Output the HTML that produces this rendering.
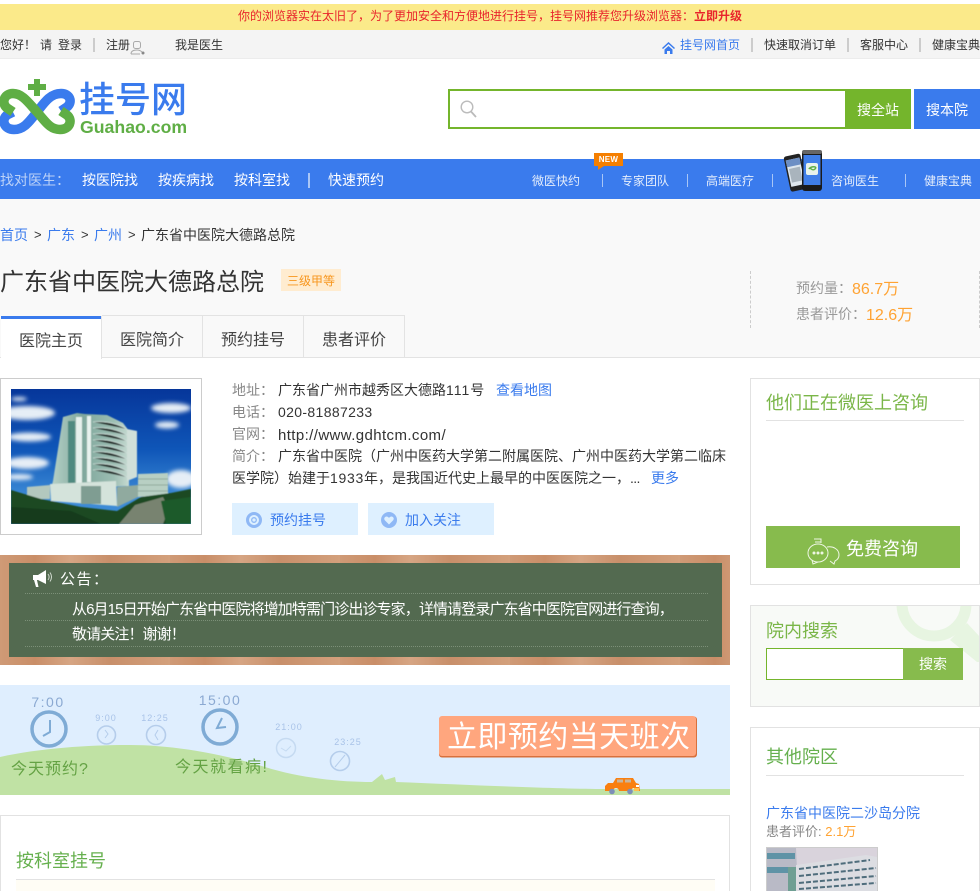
<!DOCTYPE html>
<html lang="zh-CN">
<head>
<meta charset="utf-8">
<title>广东省中医院大德路总院</title>
<style>
html,body{margin:0;padding:0;background:#fff;width:980px;height:891px;overflow:hidden;}
#p{position:relative;width:980px;height:891px;overflow:hidden;font-family:"Liberation Sans","Noto Sans CJK SC",sans-serif;font-size:12px;color:#333;}
.a{position:absolute;}
.t{position:absolute;white-space:nowrap;line-height:20px;height:20px;}
.b{color:#3a7bed;}
.s{position:absolute;width:2px;background:#ccc;}
.n{color:#fff;font-size:14px;}
.m{color:#e4edfc;font-size:12px;}
.ns{position:absolute;width:1px;height:13px;top:174px;background:#a9c6f6;}
.tab{position:absolute;top:315px;height:41px;background:#f9f9f9;border:1px solid #e3e3e3;border-left:0;border-bottom:0;width:100px;}
.l{color:#888;font-size:14px;}
.v{color:#333;font-size:14px;}
.dot{position:absolute;left:25px;width:683px;border-top:1px dotted #7c9078;height:0;}
.box{position:absolute;border:1px solid #e2e2e2;box-sizing:border-box;}
.gt{font-size:18px;color:#7ab648;}
</style>
</head>
<body>
<div id="p">
<!-- top notice -->
<div class="a" style="left:0;top:4px;width:980px;height:26px;background:#fbea8a;"></div>
<div class="t" style="left:238px;top:6px;color:#e8242c;">你的浏览器实在太旧了，为了更加安全和方便地进行挂号，挂号网推荐您升级浏览器：<b>立即升级</b></div>

<!-- top bar -->
<div class="a" style="left:0;top:30px;width:980px;height:28px;background:#f4f4f4;border-bottom:1px solid #ececec;"></div>
<div class="t" style="left:0;top:35px;">您好！</div>
<div class="t" style="left:40px;top:35px;">请</div>
<div class="t" style="left:58px;top:35px;">登录</div>
<div class="s" style="left:93px;top:38px;height:14px;"></div>
<div class="t" style="left:106px;top:35px;">注册</div>
<svg class="a" style="left:130px;top:40px;" width="15" height="16" viewBox="0 0 15 16" fill="none" stroke="#aaa" stroke-width="1"><rect x="3.500" y="1.500" width="7" height="7" rx="2"/><path d="M1 14c0-3 3-4 6-4s4 1 5 2M1 14h9"/><circle cx="13" cy="13" r="1.500" fill="#888" stroke="none"/></svg>
<div class="t" style="left:175px;top:35px;">我是医生</div>

<svg class="a" style="left:662px;top:42px;" width="13" height="12" viewBox="0 0 13 12"><path d="M6.500 0L13 6l-1 1-5.500-5L1 7 0 6zM2.500 7.500L6.500 4l4 3.500V12H8V9H5v3H2.500z" fill="#3a7bed"/></svg>
<div class="t b" style="left:680px;top:35px;">挂号网首页</div>
<div class="s" style="left:751px;top:38px;height:14px;"></div>
<div class="t" style="left:764px;top:35px;">快速取消订单</div>
<div class="s" style="left:847px;top:38px;height:14px;"></div>
<div class="t" style="left:860px;top:35px;">客服中心</div>
<div class="s" style="left:919px;top:38px;height:14px;"></div>
<div class="t" style="left:932px;top:35px;">健康宝典</div>

<!-- logo -->
<svg class="a" style="left:0;top:76px;" width="78" height="62" viewBox="0 0 78 62" fill="none" stroke-width="9.500">
<path d="M61 35L67 31C73 26 70 17.500 61 17.500C50 17.500 44 27 37 36C29 46 24 53.500 14 53.500C4 53.500 1 44 7 39L13 36" stroke="#3a7bed"/>
<path d="M13 36L7 32C1 27 4 17.500 13 17.500C22 17.500 28 26 37 36C46 46 50 53.500 60 53.500C70 53.500 73 44 67 39L61 35" stroke="#5fae45"/>
<path d="M28 11h18M37 3v17" stroke="#5fae45" stroke-width="6"/>
</svg>
<div class="t" style="left:79px;top:81px;height:38px;line-height:38px;font-size:36px;font-weight:500;color:#3a7bed;">挂号网</div>
<div class="t" style="left:80px;top:117px;font-size:17.700px;font-weight:bold;color:#5fae45;">Guahao.com</div>

<!-- search -->
<div class="a" style="left:448px;top:89px;width:397px;height:36px;border:2px solid #74b52c;border-right:0;background:#fff;"></div>
<svg class="a" style="left:460px;top:100px;" width="17" height="18" viewBox="0 0 17 18" fill="none" stroke="#bbb"><circle cx="7" cy="7" r="5.800" stroke-width="1.400"/><path d="M11 11.500l5 5.500" stroke-width="1.800"/></svg>
<div class="a" style="left:845px;top:89px;width:66px;height:40px;background:#74b52c;"></div>
<div class="t" style="left:857px;top:100px;color:#fff;font-size:14px;">搜全站</div>
<div class="a" style="left:914px;top:89px;width:66px;height:40px;background:#3a7bed;"></div>
<div class="t" style="left:926px;top:100px;color:#fff;font-size:14px;">搜本院</div>

<!-- nav -->
<div class="a" style="left:0;top:159px;width:980px;height:40px;background:#3a7bed;"></div>
<div class="t n" style="left:0;top:170px;color:#bcd2f8;">找对医生：</div>
<div class="t n" style="left:82px;top:170px;">按医院找</div>
<div class="t n" style="left:158px;top:170px;">按疾病找</div>
<div class="t n" style="left:234px;top:170px;">按科室找</div>
<div class="a" style="left:308px;top:173px;width:2px;height:15px;background:#a9c6f6;"></div>
<div class="t n" style="left:328px;top:170px;">快速预约</div>
<div class="t m" style="left:532px;top:171px;">微医快约</div>
<div class="ns" style="left:602px;"></div>
<div class="t m" style="left:621px;top:171px;">专家团队</div>
<div class="ns" style="left:687px;"></div>
<div class="t m" style="left:706px;top:171px;">高端医疗</div>
<div class="ns" style="left:772px;"></div>
<div class="t m" style="left:831px;top:171px;">咨询医生</div>
<div class="ns" style="left:905px;"></div>
<div class="t m" style="left:924px;top:171px;">健康宝典</div>
<div class="a" style="left:594px;top:153px;width:29px;height:13px;background:#f57f00;color:#fff;font-size:8px;font-weight:bold;line-height:13px;text-align:center;letter-spacing:.3px;">NEW</div>
<svg class="a" style="left:598px;top:166px;" width="6" height="4"><path d="M0 0h6L0 4z" fill="#f57f00"/></svg>
<!-- phones -->
<svg class="a" style="left:782px;top:148px;" width="44" height="46" viewBox="0 0 44 46">
<g transform="rotate(-12 12 25)"><rect x="5" y="7" width="17" height="36" rx="2.500" fill="#222"/><rect x="6.500" y="11" width="14" height="27" fill="#dfe7ee"/><rect x="6.500" y="11" width="14" height="7" fill="#6d8fc4"/><rect x="8" y="20" width="11" height="14" fill="#a9b4bd"/></g>
<rect x="20" y="2" width="20" height="41" rx="3" fill="#1b1b1b"/><rect x="20" y="2" width="20" height="4" rx="2" fill="#666"/><rect x="21.500" y="7" width="17" height="30" fill="#3f7ee8"/><rect x="24" y="15" width="12" height="12" rx="2" fill="#e8f2ea"/>
<path d="M27 21c1-3 3 3 6 0s-4-3-6 0" stroke="#5fae45" stroke-width="1.500" fill="none"/></svg>

<!-- header band -->
<div class="a" style="left:0;top:199px;width:980px;height:158px;background:#f9f9f9;border-bottom:1px solid #e3e3e3;"></div>
<div class="t b" style="left:0;top:225px;font-size:14px;">首页</div>
<div class="t" style="left:34px;top:225px;font-size:13px;">&gt;</div>
<div class="t b" style="left:47px;top:225px;font-size:14px;">广东</div>
<div class="t" style="left:81px;top:225px;font-size:13px;">&gt;</div>
<div class="t b" style="left:94px;top:225px;font-size:14px;">广州</div>
<div class="t" style="left:128px;top:225px;font-size:13px;">&gt;</div>
<div class="t" style="left:141px;top:225px;font-size:14px;">广东省中医院大德路总院</div>
<div class="t" style="left:0;top:268px;height:30px;line-height:30px;font-size:24px;color:#333;">广东省中医院大德路总院</div>
<div class="a" style="left:281px;top:269px;width:60px;height:22px;background:#ffecd0;color:#f7961e;font-size:12px;line-height:24px;text-align:center;">三级甲等</div>
<div class="a" style="left:750px;top:271px;height:57px;border-left:1px dashed #ccc;"></div>
<div class="a" style="left:979px;top:271px;height:57px;border-left:1px dashed #ccc;"></div>
<div class="t" style="left:796px;top:278px;font-size:14px;color:#999;">预约量：</div>
<div class="t" style="left:852px;top:280px;font-size:16px;color:#ffa333;">86.7万</div>
<div class="t" style="left:796px;top:304px;font-size:14px;color:#999;">患者评价：</div>
<div class="t" style="left:866px;top:306px;font-size:16px;color:#ffa333;">12.6万</div>

<!-- tabs -->
<div class="tab" style="left:102px;"></div>
<div class="tab" style="left:203px;"></div>
<div class="tab" style="left:304px;"></div>
<div class="a" style="left:1px;top:316px;width:100px;height:43px;background:#fff;border-right:1px solid #e3e3e3;"></div>
<div class="a" style="left:1px;top:316px;width:100px;height:3px;background:#3a7bed;"></div>
<div class="t" style="left:19px;top:332px;font-size:16px;color:#444;">医院主页</div>
<div class="t" style="left:120px;top:331px;font-size:16px;color:#444;">医院简介</div>
<div class="t" style="left:221px;top:331px;font-size:16px;color:#444;">预约挂号</div>
<div class="t" style="left:322px;top:331px;font-size:16px;color:#444;">患者评价</div>

<!-- hospital image -->
<div class="a" style="left:0;top:378px;width:200px;height:155px;border:1px solid #ccc;background:#fff;"></div>
<svg class="a" style="left:11px;top:389px;" width="180" height="135" viewBox="0 0 180 135">
<defs><linearGradient id="sky" x1="0" y1="0" x2="0" y2="1"><stop offset="0" stop-color="#06369a"/><stop offset=".45" stop-color="#0f56b8"/><stop offset=".8" stop-color="#3d8bd6"/></linearGradient>
<linearGradient id="bld" x1="0" y1="0" x2="1" y2="0"><stop offset="0" stop-color="#b8d2c8"/><stop offset=".4" stop-color="#7fa79c"/><stop offset=".8" stop-color="#9cbdb2"/><stop offset="1" stop-color="#c6dad2"/></linearGradient>
<filter id="bl"><feGaussianBlur stdDeviation="2.200"/></filter><filter id="ph"><feGaussianBlur stdDeviation=".6"/></filter></defs>
<rect width="180" height="135" fill="url(#sky)"/>
<g fill="#e6eef6" filter="url(#bl)"><ellipse cx="16" cy="24" rx="28" ry="7"/><ellipse cx="18" cy="48" rx="22" ry="4.500"/><ellipse cx="16" cy="74" rx="22" ry="6"/><ellipse cx="8" cy="88" rx="14" ry="3"/><ellipse cx="160" cy="19" rx="20" ry="5"/><ellipse cx="156" cy="36" rx="12" ry="3.500"/><ellipse cx="170" cy="90" rx="15" ry="9"/><ellipse cx="8" cy="10" rx="8" ry="2"/></g>
<g filter="url(#ph)">
<path d="M42 92L52 28L66 24L74 25L96 26L112 34L118 42V97L40 100z" fill="url(#bld)"/>
<path d="M116 40L126 42V88L116 92z" fill="#d0dfd9"/>
<rect x="57" y="32" width="7" height="62" fill="#4f8a80"/><rect x="65" y="28" width="6" height="66" fill="#e6f0ec"/>
<rect x="76" y="27" width="4" height="66" fill="#e8f2ee"/>
<g stroke="#d2e2dc" stroke-width="1" opacity=".75"><path d="M82 33Q100 31 116 40M82 39Q100 37 116 46M82 45Q100 43 116 52M82 51Q100 49 116 58M82 57Q100 55 116 64M82 63Q100 61 116 70M82 69Q100 67 116 76M82 75Q100 73 116 82M82 81Q100 79 116 88"/></g>
<path d="M127 85L157 84V106L127 108z" fill="#b8cfc3"/>
<path d="M127 90H157M127 96H157M127 102H157" stroke="#8fa99c" stroke-width="1"/>
<path d="M16 98L39 96V110L16 110z" fill="#b3c8be"/>
<path d="M39 95L105 92L106 117L40 112z" fill="#d4e3db"/>
<rect x="70" y="97" width="20" height="18" fill="#7f9d92"/>
<path d="M106 98L127 96V108L106 118z" fill="#90aa9f"/>
<path d="M0 101L30 110L70 118L106 122L130 108L160 104L180 100V135H0z" fill="#1a4a24"/>
<path d="M108 135L124 116L152 108L158 120L152 135z" fill="#78836f"/>
<path d="M0 118L60 122L90 135H0z" fill="#123a1a"/>
<path d="M150 112L180 108V135H155z" fill="#1f5a2c"/>
</g>
</svg>

<!-- info -->
<div class="t l" style="left:232px;top:380px;">地址：</div>
<div class="t v" style="left:278px;top:380px;">广东省广州市越秀区大德路<span style="letter-spacing:1px;">111</span>号</div>
<div class="t b" style="left:496px;top:380px;font-size:14px;">查看地图</div>
<div class="t l" style="left:232px;top:402px;">电话：</div>
<div class="t v" style="left:278px;top:402px;letter-spacing:.35px;">020-81887233</div>
<div class="t l" style="left:232px;top:424px;">官网：</div>
<div class="t v" style="left:278px;top:426px;font-size:15px;letter-spacing:.4px;">http://www.gdhtcm.com/</div>
<div class="t l" style="left:232px;top:446px;">简介：</div>
<div class="t v" style="left:278px;top:446px;">广东省中医院（广州中医药大学第二附属医院、广州中医药大学第二临床</div>
<div class="t v" style="left:232px;top:468px;">医学院）始建于<span style="letter-spacing:.7px;">1933</span>年，是我国近代史上最早的中医医院之一，<span style="letter-spacing:-.6px;">...</span></div>
<div class="t b" style="left:651px;top:468px;font-size:14px;">更多</div>

<div class="a" style="left:232px;top:503px;width:126px;height:32px;background:#def0ff;"></div>
<svg class="a" style="left:246px;top:512px;" width="16" height="16" viewBox="0 0 16 16"><circle cx="8" cy="8" r="6.500" fill="none" stroke="#8fb8f5" stroke-width="3"/><circle cx="8" cy="8" r="2.300" fill="none" stroke="#8fb8f5" stroke-width="1.300"/></svg>
<div class="t b" style="left:270px;top:510px;font-size:14px;">预约挂号</div>
<div class="a" style="left:368px;top:503px;width:126px;height:32px;background:#def0ff;"></div>
<svg class="a" style="left:381px;top:512px;" width="16" height="16" viewBox="0 0 16 16"><circle cx="8" cy="8" r="8" fill="#8fb8f5"/><path d="M8 12.500L3.800 8.200C2.500 6.500 3.800 4.500 5.500 4.500 6.600 4.500 7.500 5.200 8 6 8.500 5.200 9.400 4.500 10.500 4.500 12.200 4.500 13.500 6.500 12.200 8.200z" fill="#def0ff"/></svg>
<div class="t b" style="left:405px;top:510px;font-size:14px;">加入关注</div>

<!-- notice -->
<div class="a" style="left:0;top:555px;width:730px;height:110px;background:repeating-linear-gradient(90deg,#cf9a76 0,#c98e68 35px,#d6a583 70px,#c88f6a 110px,#d3a07c 170px);"></div>
<div class="a" style="left:9px;top:563px;width:713px;height:94px;background:#536a50;"></div>
<svg class="a" style="left:32px;top:570px;" width="20" height="18" viewBox="0 0 20 18"><path d="M1 5h5l8-5v14L6 10H5l1.500 7-2.500 0L2 10H1z" fill="#fff"/><path d="M16 4c1.500 2 1.500 4 0 6M18 2.500c2 3 2 6 0 9" fill="none" stroke="#cfd8cd" stroke-width="1"/></svg>
<div class="t" style="left:60px;top:570px;font-size:15px;color:#fff;letter-spacing:1.500px;">公告：</div>
<div class="dot" style="top:593px;"></div>
<div class="t" style="left:72px;top:600px;font-size:15px;color:#fff;letter-spacing:-.89px;">从6月15日开始广东省中医院将增加特需门诊出诊专家，详情请登录广东省中医院官网进行查询，</div>
<div class="dot" style="top:620px;"></div>
<div class="t" style="left:72px;top:625px;font-size:15px;color:#fff;letter-spacing:-.89px;">敬请关注！谢谢！</div>
<div class="dot" style="top:646px;"></div>

<!-- banner -->
<svg class="a" style="left:0;top:685px;font-family:'Liberation Sans','Noto Sans CJK SC',sans-serif;" width="730" height="110" viewBox="0 0 730 110">
<rect width="730" height="110" fill="#dfeefe"/>
<path d="M0 72C40 63 90 60 130 60C170 60 220 68 265 82C300 93 340 97 372 97L382 89 385 95 395 92 396 97C470 100 560 104 605 104L730 104V110H0z" fill="#c0e2a4"/>
<g font-size="14" fill="#8ba9d2" text-anchor="middle" letter-spacing="1.500"><text x="48" y="22">7:00</text><text x="220" y="20">15:00</text></g>
<g font-size="9" fill="#a9c3e8" text-anchor="middle" letter-spacing="1"><text x="106" y="36">9:00</text><text x="155" y="36">12:25</text><text x="289" y="45">21:00</text><text x="348" y="60">23:25</text></g>
<g fill="none" stroke="#7fabd5" stroke-width="3.500"><circle cx="49" cy="44" r="17"/><circle cx="220" cy="42" r="17"/></g>
<g fill="none" stroke="#7fabd5" stroke-width="2"><path d="M50 35V47L43 51"/><path d="M222 33L217 43L226 42"/></g>
<g fill="none" stroke="#b5cdeb" stroke-width="1.600"><circle cx="106.500" cy="50" r="9"/><circle cx="156" cy="50" r="9.500"/><path d="M105 45l3 4-3 4M158 45l-3 5 3 5" stroke-width="1"/></g>
<g fill="none" stroke="#c5daf1" stroke-width="1.500"><circle cx="286" cy="63" r="9.500"/><path d="M281 63l5 3 5-5" stroke-width="1"/></g>
<g fill="none" stroke="#b5cdeb" stroke-width="1.600"><circle cx="340" cy="76" r="9.500"/><path d="M335 82l10-12" stroke-width="1"/></g>
<text x="11" y="89" font-size="16" fill="#64a244" letter-spacing="1">今天预约?</text>
<text x="175" y="87" font-size="16" fill="#64a244" letter-spacing="1.500">今天就看病!</text>
<rect x="439" y="31.500" width="258" height="41" rx="3" fill="#d8703c"/>
<rect x="439" y="31" width="257" height="40" rx="3" fill="#ffa67e"/>
<text x="447" y="62" font-size="30" fill="#fff" textLength="243">立即预约当天班次</text>
<path d="M605 106v-5l3-3h5l3-5h17l3 5 3 1 1 7H637a3 3 0 0 0-6 0h-12a3 3 0 0 0-6 0z" fill="#f97f10"/>
<rect x="617" y="94.500" width="6" height="3" fill="#c9b59c"/><rect x="625" y="94.500" width="6" height="3" fill="#c9b59c"/>
<rect x="634" y="103" width="5" height="3" fill="#ffc14d"/><rect x="636" y="100" width="3" height="2" fill="#fff"/>
<circle cx="612" cy="106.500" r="2.800" fill="#7d8fb8"/><circle cx="630" cy="106.500" r="2.800" fill="#7d8fb8"/>
</svg>

<!-- department box -->
<div class="box" style="left:0;top:815px;width:730px;height:90px;background:#fff;"></div>
<div class="t" style="left:16px;top:851px;font-size:18px;color:#66b04e;">按科室挂号</div>
<div class="a" style="left:16px;top:879px;width:699px;height:1px;background:#e2e2e2;"></div>
<div class="a" style="left:16px;top:880px;width:699px;height:11px;background:#fffdf5;"></div>

<!-- right 1 -->
<div class="box" style="left:750px;top:378px;width:230px;height:207px;background:#fff;"></div>
<div class="t gt" style="left:766px;top:393px;">他们正在微医上咨询</div>
<div class="a" style="left:766px;top:420px;width:198px;height:1px;background:#e2e2e2;"></div>
<div class="a" style="left:766px;top:526px;width:194px;height:42px;background:#87bb4d;"></div>
<svg class="a" style="left:806px;top:538px;" width="34" height="28" viewBox="0 0 34 28" fill="none" stroke="#eef6e3" stroke-width="1"><path d="M8 1h7v4M9 4h6"/><ellipse cx="12" cy="15" rx="10" ry="9"/><path d="M6 22l1 4 5-2"/><path d="M21 9c6-1 12 2 12 8 0 3-2 5-4 6l-1 3-4-3"/><circle cx="8" cy="15" r="1" fill="#eef6e3"/><circle cx="12" cy="15" r="1" fill="#eef6e3"/><circle cx="16" cy="15" r="1" fill="#eef6e3"/></svg>
<div class="t" style="left:846px;top:539px;font-size:18px;color:#fff;">免费咨询</div>

<!-- right 2 -->
<div class="box" style="left:750px;top:605px;width:230px;height:102px;background:#f8faf7;overflow:hidden;">
<svg class="a" style="left:0;top:0;" width="228" height="100" viewBox="0 0 228 100"><circle cx="183" cy="-2" r="32" fill="none" stroke="#e7f5e1" stroke-width="11"/><path d="M199 34L226 56H229V31L216 17z" fill="#e7f5e1"/></svg>
</div>
<div class="t gt" style="left:766px;top:621px;">院内搜索</div>
<div class="a" style="left:766px;top:648px;width:136px;height:30px;border:1px solid #74b52c;border-right:0;background:#fff;"></div>
<div class="a" style="left:903px;top:648px;width:60px;height:32px;background:#87bb4d;color:#fff;font-size:14px;line-height:33px;text-align:center;">搜索</div>

<!-- right 3 -->
<div class="box" style="left:750px;top:727px;width:230px;height:180px;background:#fff;"></div>
<div class="t" style="left:766px;top:747px;font-size:18px;color:#66b04e;">其他院区</div>
<div class="a" style="left:766px;top:775px;width:198px;height:1px;background:#e2e2e2;"></div>
<div class="t b" style="left:766px;top:803px;font-size:14px;">广东省中医院二沙岛分院</div>
<div class="t" style="left:766px;top:822px;font-size:13px;color:#888;">患者评价: <span style="color:#ffa333;">2.1万</span></div>
<svg class="a" style="left:766px;top:847px;" width="112" height="44" viewBox="0 0 112 44">
<rect width="112" height="44" fill="#d9d3dc"/>
<path d="M1 1h29l2 44H1z" fill="#b9bac6"/>
<path d="M1 6h28v6H1zM1 20h28v6H1z" fill="#5f93a6"/>
<path d="M30 18L100 8l11 2v34H30z" fill="#dcdde2"/>
<g stroke="#4f6d7c" stroke-width="2"><path d="M33 22L104 13M33 29L110 21M33 36L110 29M33 42L110 36" stroke-dasharray="5 2"/></g>
<path d="M22 20h8v24h-8z" fill="#6f9f93"/>
<rect x="0.500" y="0.500" width="111" height="44" fill="none" stroke="#ccc"/>
</svg>
</div>
</body>
</html>
